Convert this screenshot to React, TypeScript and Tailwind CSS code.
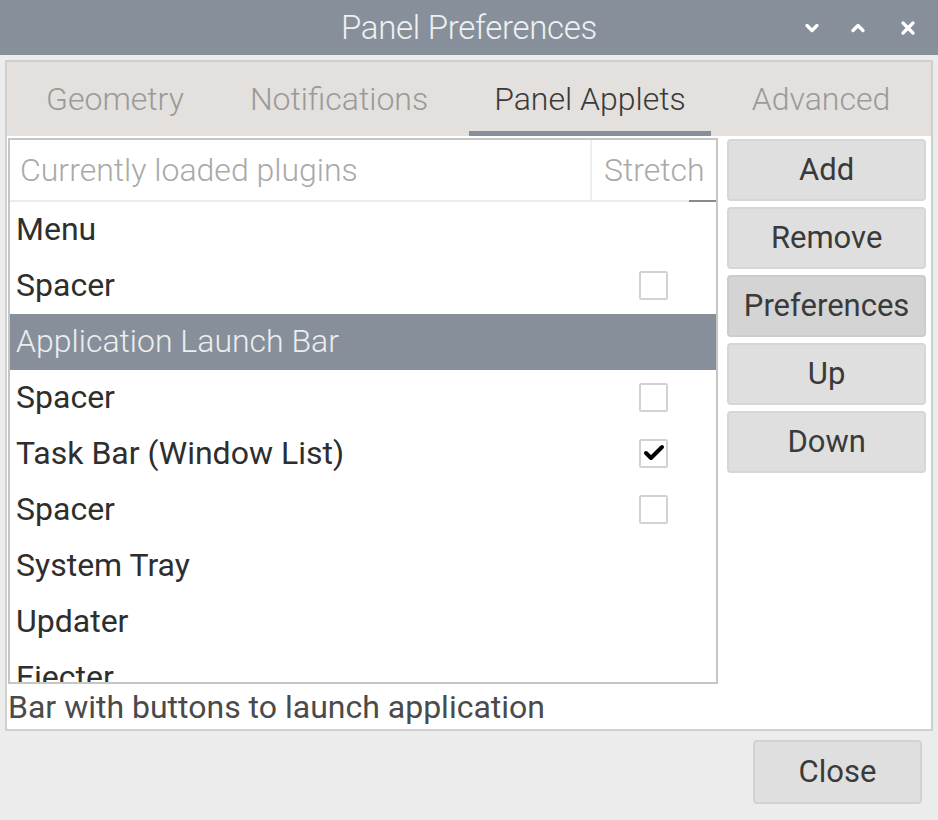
import { Check, ChevronDown, ChevronUp, X } from "lucide-react";

const rows = [
  { name: "Menu", box: null },
  { name: "Spacer", box: false },
  { name: "Application Launch Bar", box: null, selected: true },
  { name: "Spacer", box: false },
  { name: "Task Bar (Window List)", box: true },
  { name: "Spacer", box: false },
  { name: "System Tray", box: null },
  { name: "Updater", box: null },
  { name: "Ejecter", box: null },
];

const tabs = ["Geometry", "Notifications", "Panel Applets", "Advanced"];
const buttons = ["Add", "Remove", "Preferences", "Up", "Down"];

function Checkbox({ on }: { on: boolean }) {
  return (
    <span className="flex h-[29px] w-[29px] items-center justify-center rounded-[2px] border-2 border-[#d2d2d2] bg-white">
      {on && <Check className="h-6 w-6 text-black" strokeWidth={4} />}
    </span>
  );
}

export default function App() {
  return (
    <div className="flex h-[820px] w-[938px] flex-col bg-[#ececec] font-['Roboto',sans-serif] text-[#333]">
      {/* title bar */}
      <div className="relative flex h-[55px] shrink-0 items-center justify-center bg-[#87909a]">
        <span className="text-[33px] font-light tracking-[-0.3px] text-[#eef0f2]">Panel Preferences</span>
        <div className="absolute right-[20px] top-0 flex h-full items-center text-white">
          <ChevronDown className="h-5 w-5" strokeWidth={4} />
          <ChevronUp className="ml-[26px] h-5 w-5" strokeWidth={4} />
          <X className="ml-[30px] h-5 w-5" strokeWidth={4} />
        </div>
      </div>

      {/* notebook */}
      <div className="mx-[5px] mt-[5px] flex h-[671px] flex-col border-2 border-[#cfcfcf] bg-white">
        <div className="flex h-[74px] shrink-0 items-stretch bg-[#e3e0dd] pl-[6px]">
          {tabs.map((t) => (
            <div key={t} className="flex px-2">
              <div
                className={
                  t === "Panel Applets"
                    ? "flex items-center border-b-[5px] border-[#87909a] px-[25px] pt-[5px] text-[32px] font-light text-[#3a3a3a]"
                    : "flex items-center border-b-[5px] border-transparent px-[25px] pt-[5px] text-[32px] font-light text-[#9a9a9a]"
                }
              >
                {t}
              </div>
            </div>
          ))}
        </div>

        <div className="flex flex-1 gap-[9px] pl-[1px] pr-[5px] pt-[2px]">
          {/* tree view */}
          <div className="flex w-[711px] flex-col">
            <div className="flex h-[546px] flex-col overflow-hidden border-2 border-[#c6c6c6]">
              <div className="relative flex h-[62px] shrink-0 border-b-2 border-[#ececec]">
                <div className="flex w-[582px] items-center border-r-2 border-[#eeeeee] pl-[10px] text-[32px] font-light text-[#a9a9a9]">
                  Currently loaded plugins
                </div>
                <div className="flex flex-1 items-center pl-[12px] text-[32px] font-light text-[#a9a9a9]">Stretch</div>
                <span className="absolute bottom-[-2px] right-0 h-[2px] w-[27px] bg-[#8a8a8a]" />
              </div>
              {rows.map((r, i) => (
                <div
                  key={i}
                  className={
                    r.selected
                      ? "flex h-[56px] shrink-0 items-center justify-between bg-[#87909a] pb-[2px] pl-[6px] pr-[48px] text-[32px] font-light text-[#eceef0]"
                      : "flex h-[56px] shrink-0 items-center justify-between pb-[2px] pl-[6px] pr-[48px] text-[32px] font-normal text-[#2e2e2e]"
                  }
                >
                  <span>{r.name}</span>
                  {r.box !== null && r.box !== undefined && <Checkbox on={r.box} />}
                </div>
              ))}
            </div>
            <div className="flex h-[46px] items-center text-[32px] text-[#4a4a4a]">
              Bar with buttons to launch application
            </div>
          </div>

          {/* buttons */}
          <div className="flex w-[199px] flex-col gap-[6px] pt-[1px]">
            {buttons.map((b) => (
              <button
                key={b}
                className={
                  b === "Preferences"
                    ? "h-[62px] rounded-[4px] border-2 border-[#cccccc] bg-[#d4d4d4] text-[31px] text-[#3a3a3a]"
                    : "h-[62px] rounded-[4px] border-2 border-[#d6d6d6] bg-[#dfdfdf] text-[31px] text-[#3a3a3a]"
                }
              >
                {b}
              </button>
            ))}
          </div>
        </div>
      </div>

      <div className="flex justify-end pr-[16px] pt-[9px]">
        <button className="h-[64px] w-[169px] rounded-[4px] border-2 border-[#d2d2d2] bg-[#dfdfdf] text-[31px] text-[#3a3a3a]">
          Close
        </button>
      </div>
    </div>
  );
}
